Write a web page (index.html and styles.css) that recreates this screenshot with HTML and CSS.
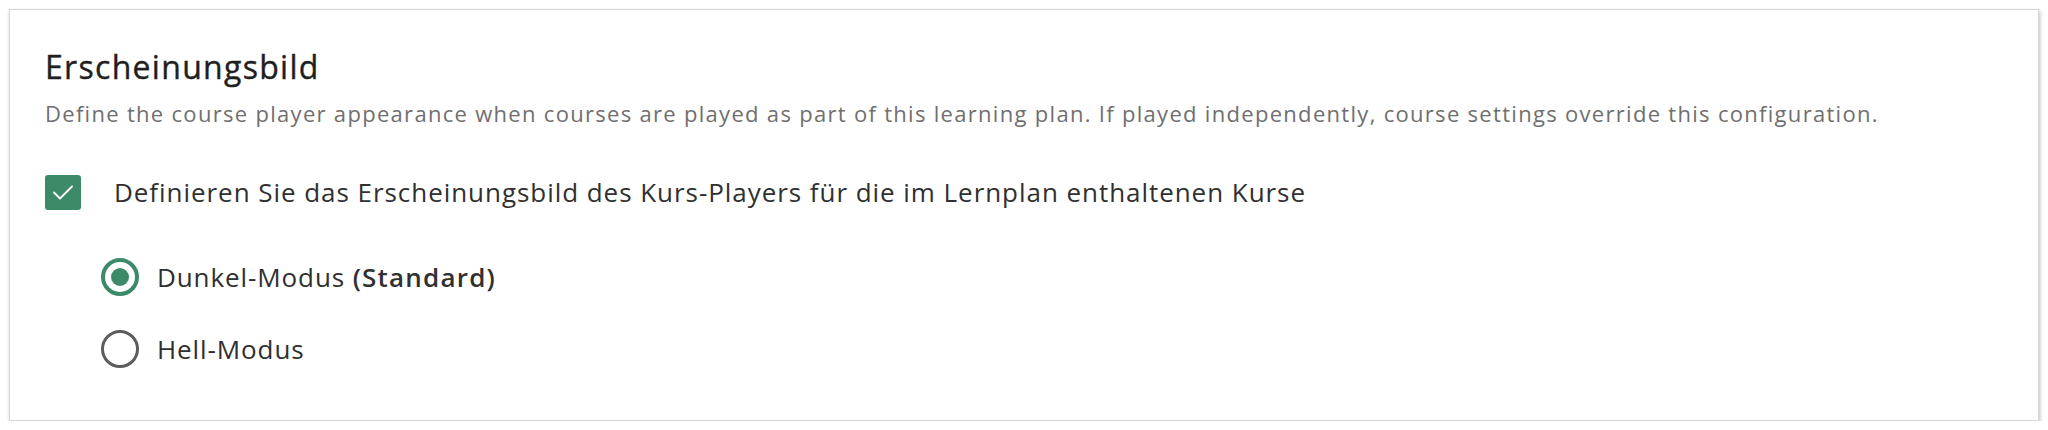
FILE: index.html
```html
<!DOCTYPE html>
<html lang="de">
<head>
<meta charset="utf-8">
<title>Erscheinungsbild</title>
<link rel="stylesheet" href="styles.css">
</head>
<body>
<section class="card">
  <h2 class="title">Erscheinungsbild</h2>
  <p class="desc">Define the course player appearance when courses are played as part of this learning plan. If played independently, course settings override this configuration.</p>
  <label class="check-row">
    <span class="checkbox">
      <svg viewBox="0 0 36 36" width="36" height="36"><path d="M9 18.5 L15 24.5 L27 12.5" fill="none" stroke="#fff" stroke-width="1.8" stroke-linecap="round" stroke-linejoin="round"/></svg>
    </span>
    <span class="check-label">Definieren Sie das Erscheinungsbild des Kurs-Players für die im Lernplan enthaltenen Kurse</span>
  </label>
  <div class="radios">
    <label class="radio-row">
      <span class="radio checked"><span class="dot"></span></span>
      <span class="radio-label">Dunkel-Modus <b>(Standard)</b></span>
    </label>
    <label class="radio-row">
      <span class="radio"></span>
      <span class="radio-label">Hell-Modus</span>
    </label>
  </div>
</section>
</body>
</html>
```
FILE: styles.css
```css
html, body {
  margin: 0;
  padding: 0;
  background: #ffffff;
}
body {
  font-family: "Open Sans", "Noto Sans", sans-serif;
  color: #333333;
  padding: 9px 9px 0 9px;
}
.card {
  box-sizing: border-box;
  height: 412px;
  border: 1px solid #d6d6d6;
  box-shadow: 1px 2px 4px rgba(0, 0, 0, 0.24);
  padding: 37px 35px 0 35px;
  background: #fff;
}
.title {
  margin: 0;
  font-size: 32px;
  font-weight: 400;
  letter-spacing: 1.3px;
  line-height: 40px;
  color: #1f1f1f;
  -webkit-text-stroke: 0.4px #1f1f1f;
}
.desc {
  margin: 11px 0 0 0;
  font-size: 22px;
  letter-spacing: 1.3px;
  line-height: 30px;
  color: #6f6f6f;
}
.check-row {
  display: flex;
  align-items: center;
  gap: 33px;
  margin-top: 46px;
  height: 36px;
}
.checkbox {
  width: 36px;
  height: 35px;
  border-radius: 3px;
  background: #3d8a69;
  display: flex;
  align-items: center;
  justify-content: center;
  flex: none;
}
.check-label {
  font-size: 26px;
  letter-spacing: 0.95px;
  line-height: 36px;
  color: #303030;
}
.radios {
  display: flex;
  flex-direction: column;
  gap: 34px;
  margin-top: 48px;
  padding-left: 56px;
}
.radio-row {
  display: flex;
  align-items: center;
  gap: 18px;
  height: 38px;
}
.radio {
  box-sizing: border-box;
  width: 38px;
  height: 38px;
  border-radius: 50%;
  border: 3px solid #5c5c5c;
  display: flex;
  align-items: center;
  justify-content: center;
  flex: none;
}
.radio.checked {
  border: 4px solid #3d8a69;
}
.radio .dot {
  width: 18px;
  height: 18px;
  border-radius: 50%;
  background: #3d8a69;
}
.radio-label {
  font-size: 26px;
  letter-spacing: 0.9px;
  line-height: 38px;
  color: #303030;
}
.radio-label b {
  font-weight: 600;
  letter-spacing: 1.2px;
}
```
